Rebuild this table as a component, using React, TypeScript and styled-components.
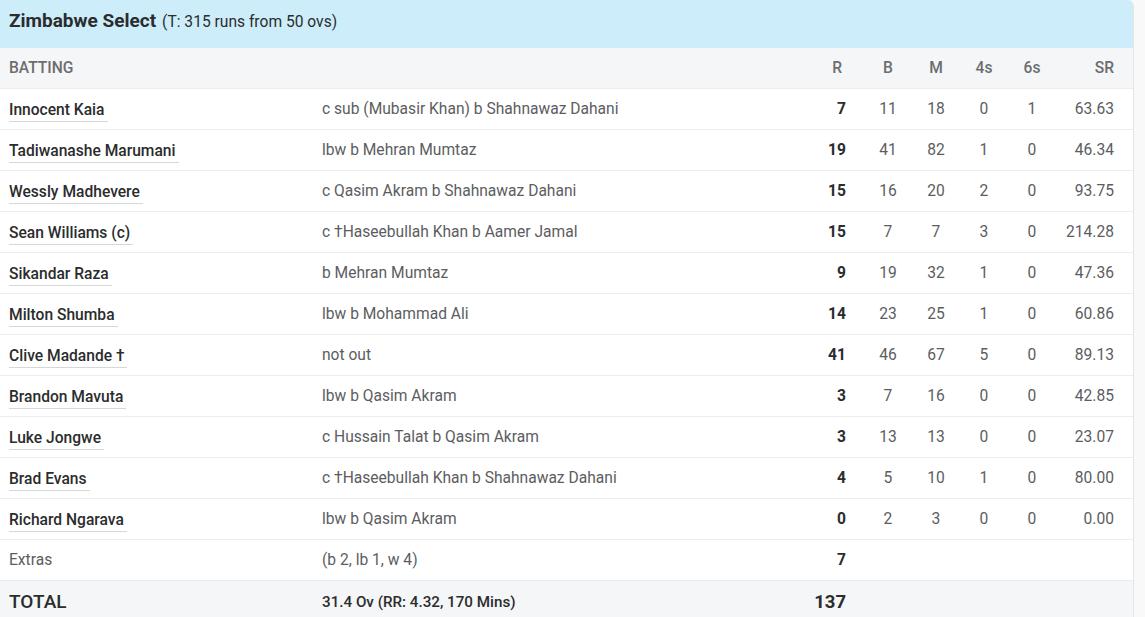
import styled, {createGlobalStyle} from 'styled-components'

const GlobalStyle = createGlobalStyle`
  html, body {
    margin: 0;
    padding: 0;
    background: #f9f9fa;
  }
  body {
    font-family: 'Roboto', 'Liberation Sans', sans-serif;
    color: #48494a;
  }
`

const Card = styled.div`
  width: 1133px;
  background: #fff;
  border-right: 1px solid #e4e5e6;
  border-top-right-radius: 6px;
  overflow: hidden;
`

const TeamHeader = styled.div`
  display: flex;
  align-items: baseline;
  gap: 6px;
  height: 48px;
  box-sizing: border-box;
  padding: 9px 9px 0;
  background: #cdedfb;
`

const TeamName = styled.span`
  font-size: 19px;
  font-weight: 700;
  color: #2b2c2d;
`

const Target = styled.span`
  font-size: 15.6px;
  color: #2b2c2d;
`

const Row = styled.div<{$shade?: boolean; $h?: number}>`
  display: grid;
  grid-template-columns: 313px 1fr 64px 48px 48px 48px 48px 58px;
  align-items: center;
  height: ${p => p.$h || 41}px;
  box-sizing: border-box;
  padding: 0 19px 0 9px;
  background: ${p => (p.$shade ? '#f5f6f7' : '#fff')};
  border-bottom: 1px solid #ececed;
  font-size: 15.6px;
`

const HeadCell = styled.div<{$align?: 'left' | 'right' | 'runs'}>`
  color: #6c6d6f;
  font-weight: 500;
  text-align: ${p => (p.$align === 'left' ? 'left' : p.$align ? 'right' : 'center')};
  padding-right: ${p => (p.$align === 'runs' ? '22px' : '0')};
`

const Batter = styled.div`
  display: flex;
  padding-top: 5px;
`

const BatterLink = styled.span`
  color: #2b2c2d;
  font-weight: 500;
  padding-right: 3px;
  padding-bottom: 2px;
  border-bottom: 1px solid #d6d7d9;
  line-height: 17px;
`

const Plain = styled.div<{$strong?: boolean; $big?: boolean}>`
  color: ${p => (p.$strong ? '#2b2c2d' : '#5c5d5f')};
  font-weight: ${p => (p.$strong ? 500 : 400)};
  font-size: ${p => (p.$big ? '19px' : p.$strong ? '15.2px' : '15.6px')};
`

const Runs = styled.div<{$big?: boolean}>`
  text-align: right;
  padding-right: 18px;
  font-weight: 700;
  color: #2b2c2d;
  font-size: ${p => (p.$big ? '18.5px' : '15.6px')};
`

const Stat = styled.div<{$right?: boolean}>`
  text-align: ${p => (p.$right ? 'right' : 'center')};
  color: #5c5d5f;
`

type Batting = [string, string, number, number, number, number, number, string]

const innings: Batting[] = [
  ['Innocent Kaia', 'c sub (Mubasir Khan) b Shahnawaz Dahani', 7, 11, 18, 0, 1, '63.63'],
  ['Tadiwanashe Marumani', 'lbw b Mehran Mumtaz', 19, 41, 82, 1, 0, '46.34'],
  ['Wessly Madhevere', 'c Qasim Akram b Shahnawaz Dahani', 15, 16, 20, 2, 0, '93.75'],
  ['Sean Williams (c)', 'c †Haseebullah Khan b Aamer Jamal', 15, 7, 7, 3, 0, '214.28'],
  ['Sikandar Raza', 'b Mehran Mumtaz', 9, 19, 32, 1, 0, '47.36'],
  ['Milton Shumba', 'lbw b Mohammad Ali', 14, 23, 25, 1, 0, '60.86'],
  ['Clive Madande †', 'not out', 41, 46, 67, 5, 0, '89.13'],
  ['Brandon Mavuta', 'lbw b Qasim Akram', 3, 7, 16, 0, 0, '42.85'],
  ['Luke Jongwe', 'c Hussain Talat b Qasim Akram', 3, 13, 13, 0, 0, '23.07'],
  ['Brad Evans', 'c †Haseebullah Khan b Shahnawaz Dahani', 4, 5, 10, 1, 0, '80.00'],
  ['Richard Ngarava', 'lbw b Qasim Akram', 0, 2, 3, 0, 0, '0.00'],
]

const App = () => {
  return (
    <>
      <GlobalStyle />
      <Card>
        <TeamHeader>
          <TeamName>Zimbabwe Select</TeamName>
          <Target>(T: 315 runs from 50 ovs)</Target>
        </TeamHeader>
        <Row $shade>
          <HeadCell $align="left">BATTING</HeadCell>
          <div />
          <HeadCell $align="runs">R</HeadCell>
          <HeadCell>B</HeadCell>
          <HeadCell>M</HeadCell>
          <HeadCell>4s</HeadCell>
          <HeadCell>6s</HeadCell>
          <HeadCell $align="right">SR</HeadCell>
        </Row>
        {innings.map(([name, how, r, b, m, fours, sixes, sr]) => (
          <Row key={name}>
            <Batter>
              <BatterLink>{name}</BatterLink>
            </Batter>
            <Plain>{how}</Plain>
            <Runs>{r}</Runs>
            <Stat>{b}</Stat>
            <Stat>{m}</Stat>
            <Stat>{fours}</Stat>
            <Stat>{sixes}</Stat>
            <Stat $right>{sr}</Stat>
          </Row>
        ))}
        <Row>
          <Plain>Extras</Plain>
          <Plain>(b 2, lb 1, w 4)</Plain>
          <Runs>7</Runs>
        </Row>
        <Row $shade $h={42}>
          <Plain $strong $big>TOTAL</Plain>
          <Plain $strong>31.4 Ov (RR: 4.32, 170 Mins)</Plain>
          <Runs $big>137</Runs>
        </Row>
      </Card>
    </>
  )
}

export default App
